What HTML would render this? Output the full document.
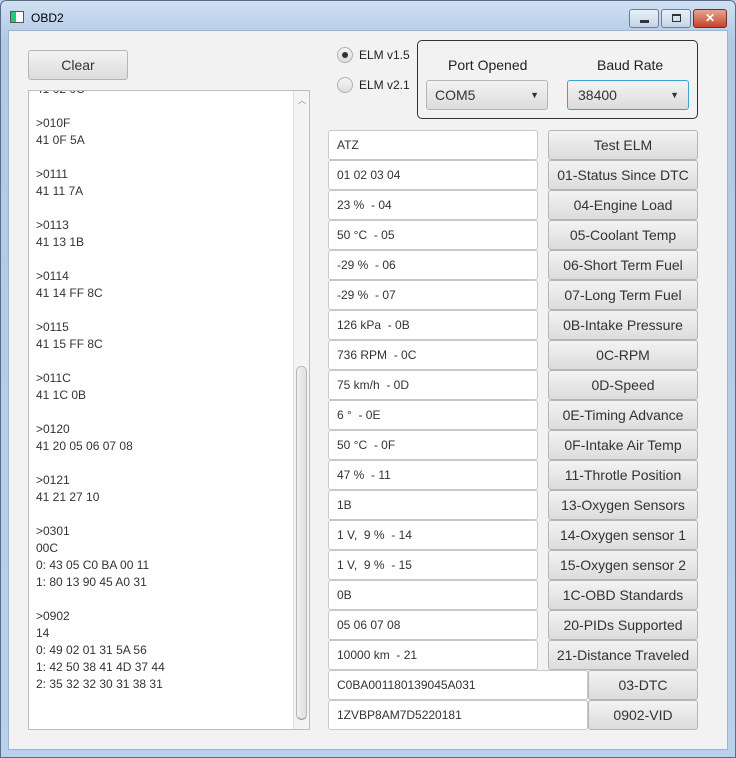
<!DOCTYPE html>
<html><head><meta charset="utf-8"><style>
*{box-sizing:border-box;margin:0;padding:0}
body{width:736px;height:758px;overflow:hidden;font-family:"Liberation Sans",sans-serif;font-size:13px;color:#222;background:#b9d1ea}
.win{position:absolute;left:0;top:0;width:736px;height:758px;background:linear-gradient(#cfe0f2,#b0c9e5 40px,#b9d1ea);border:1px solid #5a6d85;border-radius:6px 6px 0 0}
.title{position:absolute;left:30px;top:10px;font-size:12px;color:#000}
.ico{position:absolute;left:9px;top:10px;width:14px;height:12px;border:1px solid #555;background:linear-gradient(90deg,#2c7 0 40%,#fff 40%)}
.tb{position:absolute;top:8px;height:19px;border:1px solid #6a7e98;border-radius:3px;background:linear-gradient(#e8f0f8,#c4d4e6)}
.content{position:absolute;left:8px;top:30px;width:720px;height:720px;background:#f2f2f2;border:1px solid #9fb3cc}
.abs{position:absolute}
.btn{position:absolute;border:1px solid #b5b5b5;border-radius:3px;background:linear-gradient(#f3f3f3,#dcdcdc);text-align:center;line-height:28px;font-size:14px;color:#333;white-space:pre}
.fld{position:absolute;background:#fff;border:1px solid #c8c8c8;border-radius:3px;padding-left:8px;line-height:28px;font-size:12px;color:#333;white-space:pre}
.log{position:absolute;left:28px;top:90px;width:282px;height:640px;background:#fff;border:1px solid #bdbdbd;overflow:hidden}
.log pre{font-family:"Liberation Sans",sans-serif;font-size:12px;line-height:17px;margin:-10px 0 0 7px;color:#333}
.sb{position:absolute;right:0;top:0;width:16px;height:100%;background:#f4f4f4;border-left:1px solid #e0e0e0}
.thumb{position:absolute;left:2px;top:275px;width:11px;height:354px;border:1px solid #b8b8b8;border-radius:5px;background:linear-gradient(90deg,#f0f0f0,#e0e0e0)}
.radio{position:absolute;width:16px;height:16px;border-radius:50%;border:1px solid #b0b0b0;background:linear-gradient(#f5f5f5,#ddd)}
</style></head><body>
<div class="win">
<div class="ico"></div><div class="title">OBD2</div>
<div class="tb" style="left:628px;width:30px"><div class="abs" style="left:10px;top:10px;width:9px;height:3px;background:#333"></div></div>
<div class="tb" style="left:660px;width:30px"><div class="abs" style="left:10px;top:4px;width:9px;height:8px;border:1px solid #333;border-top-width:2px"></div></div>
<div class="tb" style="left:692px;width:34px;background:linear-gradient(#e6a493,#c5432b);border-color:#7a2a1a;color:#fff;text-align:center;font-weight:bold;font-size:12px;line-height:17px">✕</div>
</div>
<div class="content"></div>
<div class="btn" style="left:28px;top:50px;width:100px;height:30px">Clear</div>
<div class="log"><pre>41 02 0C

>010F
41 0F 5A

>0111
41 11 7A

>0113
41 13 1B

>0114
41 14 FF 8C

>0115
41 15 FF 8C

>011C
41 1C 0B

>0120
41 20 05 06 07 08

>0121
41 21 27 10

>0301
00C
0: 43 05 C0 BA 00 11
1: 80 13 90 45 A0 31

>0902
14
0: 49 02 01 31 5A 56
1: 42 50 38 41 4D 37 44
2: 35 32 32 30 31 38 31


></pre>
<div class="sb"><div class="abs" style="left:4px;top:4px;font-size:8px;color:#777">︿</div><div class="thumb"></div><div class="abs" style="left:4px;bottom:2px;font-size:8px;color:#777">﹀</div></div></div>
<div class="radio" style="left:337px;top:47px"><div class="abs" style="left:4px;top:4px;width:6px;height:6px;border-radius:50%;background:#333"></div></div>
<div class="abs" style="left:359px;top:48px;font-size:12px">ELM v1.5</div>
<div class="radio" style="left:337px;top:77px"></div>
<div class="abs" style="left:359px;top:78px;font-size:12px">ELM v2.1</div>
<div class="abs" style="left:417px;top:40px;width:281px;height:79px;border:1px solid #333;border-radius:5px"></div>
<div class="abs" style="left:448px;top:57px;font-size:14px">Port Opened</div>
<div class="abs" style="left:597px;top:57px;font-size:14px">Baud Rate</div>
<div class="btn" style="left:426px;top:80px;width:122px;height:30px;text-align:left;padding-left:8px;font-size:14px">COM5<span class="abs" style="right:8px;top:0;font-size:9px">▼</span></div>
<div class="btn" style="left:567px;top:80px;width:122px;height:30px;text-align:left;padding-left:10px;border:1px solid #3aa0d8;font-size:14px">38400<span class="abs" style="right:9px;top:0;font-size:9px">▼</span></div>
<div class="fld" style="left:328px;top:130px;width:210px;height:30px">ATZ</div><div class="btn" style="left:548px;top:130px;width:150px;height:30px">Test ELM</div>
<div class="fld" style="left:328px;top:160px;width:210px;height:30px">01 02 03 04</div><div class="btn" style="left:548px;top:160px;width:150px;height:30px">01-Status Since DTC</div>
<div class="fld" style="left:328px;top:190px;width:210px;height:30px">23 %  - 04</div><div class="btn" style="left:548px;top:190px;width:150px;height:30px">04-Engine Load</div>
<div class="fld" style="left:328px;top:220px;width:210px;height:30px">50 °C  - 05</div><div class="btn" style="left:548px;top:220px;width:150px;height:30px">05-Coolant Temp</div>
<div class="fld" style="left:328px;top:250px;width:210px;height:30px">-29 %  - 06</div><div class="btn" style="left:548px;top:250px;width:150px;height:30px">06-Short Term Fuel</div>
<div class="fld" style="left:328px;top:280px;width:210px;height:30px">-29 %  - 07</div><div class="btn" style="left:548px;top:280px;width:150px;height:30px">07-Long Term Fuel</div>
<div class="fld" style="left:328px;top:310px;width:210px;height:30px">126 kPa  - 0B</div><div class="btn" style="left:548px;top:310px;width:150px;height:30px">0B-Intake Pressure</div>
<div class="fld" style="left:328px;top:340px;width:210px;height:30px">736 RPM  - 0C</div><div class="btn" style="left:548px;top:340px;width:150px;height:30px">0C-RPM</div>
<div class="fld" style="left:328px;top:370px;width:210px;height:30px">75 km/h  - 0D</div><div class="btn" style="left:548px;top:370px;width:150px;height:30px">0D-Speed</div>
<div class="fld" style="left:328px;top:400px;width:210px;height:30px">6 °  - 0E</div><div class="btn" style="left:548px;top:400px;width:150px;height:30px">0E-Timing Advance</div>
<div class="fld" style="left:328px;top:430px;width:210px;height:30px">50 °C  - 0F</div><div class="btn" style="left:548px;top:430px;width:150px;height:30px">0F-Intake Air Temp</div>
<div class="fld" style="left:328px;top:460px;width:210px;height:30px">47 %  - 11</div><div class="btn" style="left:548px;top:460px;width:150px;height:30px">11-Throtle Position</div>
<div class="fld" style="left:328px;top:490px;width:210px;height:30px">1B</div><div class="btn" style="left:548px;top:490px;width:150px;height:30px">13-Oxygen Sensors</div>
<div class="fld" style="left:328px;top:520px;width:210px;height:30px">1 V,  9 %  - 14</div><div class="btn" style="left:548px;top:520px;width:150px;height:30px">14-Oxygen sensor 1</div>
<div class="fld" style="left:328px;top:550px;width:210px;height:30px">1 V,  9 %  - 15</div><div class="btn" style="left:548px;top:550px;width:150px;height:30px">15-Oxygen sensor 2</div>
<div class="fld" style="left:328px;top:580px;width:210px;height:30px">0B</div><div class="btn" style="left:548px;top:580px;width:150px;height:30px">1C-OBD Standards</div>
<div class="fld" style="left:328px;top:610px;width:210px;height:30px">05 06 07 08</div><div class="btn" style="left:548px;top:610px;width:150px;height:30px">20-PIDs Supported</div>
<div class="fld" style="left:328px;top:640px;width:210px;height:30px">10000 km  - 21</div><div class="btn" style="left:548px;top:640px;width:150px;height:30px">21-Distance Traveled</div>
<div class="fld" style="left:328px;top:670px;width:260px;height:30px">C0BA001180139045A031</div><div class="btn" style="left:588px;top:670px;width:110px;height:30px">03-DTC</div>
<div class="fld" style="left:328px;top:700px;width:260px;height:30px">1ZVBP8AM7D5220181</div><div class="btn" style="left:588px;top:700px;width:110px;height:30px">0902-VID</div>
</body></html>
